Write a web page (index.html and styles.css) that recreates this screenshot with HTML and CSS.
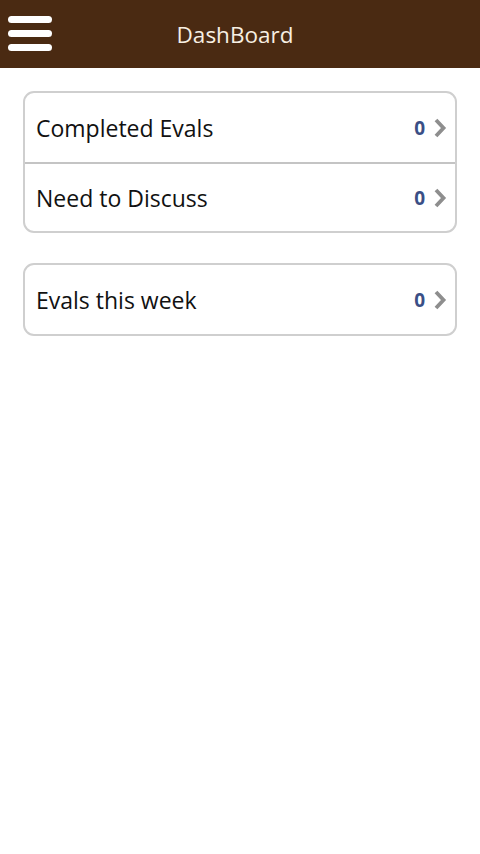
FILE: index.html
```html
<!DOCTYPE html>
<html>
<head>
<meta charset="utf-8">
<link rel="stylesheet" href="styles.css">
</head>
<body>
<header class="topbar">
  <div class="menu-btn"><span></span><span></span><span></span></div>
  <h1 class="title">DashBoard</h1>
</header>
<main class="content">
  <ul class="list">
    <li class="row"><span class="label">Completed Evals</span><span class="count">0</span><svg class="chev" viewBox="0 0 14 20" width="14" height="20"><path d="M3 2 L10.5 10 L3 18" fill="none" stroke="#8e8e8e" stroke-width="3.8"/></svg></li>
    <li class="row"><span class="label">Need to Discuss</span><span class="count">0</span><svg class="chev" viewBox="0 0 14 20" width="14" height="20"><path d="M3 2 L10.5 10 L3 18" fill="none" stroke="#8e8e8e" stroke-width="3.8"/></svg></li>
  </ul>
  <ul class="list">
    <li class="row"><span class="label">Evals this week</span><span class="count">0</span><svg class="chev" viewBox="0 0 14 20" width="14" height="20"><path d="M3 2 L10.5 10 L3 18" fill="none" stroke="#8e8e8e" stroke-width="3.8"/></svg></li>
  </ul>
</main>
</body>
</html>
```
FILE: styles.css
```css
* { box-sizing: border-box; }
html, body { margin: 0; padding: 0; background: #ffffff; }
body { font-family: "Open Sans", "Noto Sans", sans-serif; width: 480px; height: 854px; }
.topbar {
  height: 68px;
  background: #4a2a12;
  display: flex;
  align-items: center;
  position: relative;
}
.menu-btn {
  position: absolute;
  left: 8px;
  top: 16px;
  width: 44px;
  display: flex;
  flex-direction: column;
  gap: 7px;
}
.menu-btn span {
  display: block;
  height: 7px;
  background: #ffffff;
  border-radius: 4px;
}
.title {
  margin: 0 auto;
  padding-right: 10px;
  font-size: 22.5px;
  font-weight: normal;
  color: #f7efe2;
}
.content {
  padding: 23px 23px 0 23px;
  display: flex;
  flex-direction: column;
  gap: 30px;
}
.list {
  list-style: none;
  margin: 0;
  padding: 0;
  border: 2px solid #cfcfcf;
  border-radius: 11px;
  overflow: hidden;
}
.row {
  height: 69px;
  display: flex;
  align-items: center;
  padding: 0 8px 0 11px;
}
.row + .row { border-top: 2px solid #c4c4c4; }
.label {
  flex: 1;
  font-size: 23px;
  color: #111111;
}
.count {
  font-size: 19px;
  font-weight: bold;
  color: #3a4f86;
  margin-right: 8px;
}
.chev { display: block; }
```
